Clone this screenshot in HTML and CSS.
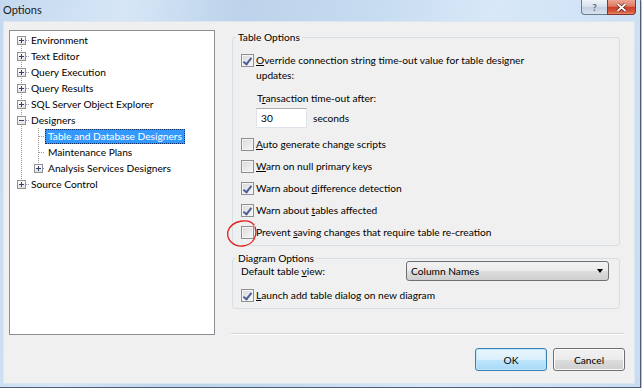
FILE: index.html
```html
<!DOCTYPE html>
<html lang="en">
  <head>
    <meta charset="UTF-8" />
    <title>Options</title>
    <link rel="stylesheet" href="styles.css">
  </head>
  <body>
    <div class="window">
      <div class="titlebar">
        <span class="title">Options</span>
        <div class="caption-buttons">
          <span class="cap-btn help">?</span>
          <span class="cap-btn close">
            <svg width="11" height="9" viewBox="0 0 11 9"><path d="M1.5 1 L9.5 8 M9.5 1 L1.5 8" stroke="#5a1a12" stroke-width="3.2"/><path d="M1.5 1 L9.5 8 M9.5 1 L1.5 8" stroke="#fff" stroke-width="1.8"/></svg>
          </span>
        </div>
      </div>

      <div class="client">
        <div class="main">
          <!-- arbre des pages -->
          <div class="tree">
            <div class="node first"><span class="tw plus"></span><span class="lbl">Environment</span></div>
            <div class="node"><span class="tw plus"></span><span class="lbl">Text Editor</span></div>
            <div class="node"><span class="tw plus"></span><span class="lbl">Query Execution</span></div>
            <div class="node"><span class="tw plus"></span><span class="lbl">Query Results</span></div>
            <div class="node"><span class="tw plus"></span><span class="lbl">SQL Server Object Explorer</span></div>
            <div class="node"><span class="tw minus"></span><span class="lbl">Designers</span></div>
            <div class="node child"><span class="lbl sel">Table and Database Designers</span></div>
            <div class="node child"><span class="lbl">Maintenance Plans</span></div>
            <div class="node child-last"><span class="tw plus"></span><span class="lbl">Analysis Services Designers</span></div>
            <div class="node last"><span class="tw plus"></span><span class="lbl">Source Control</span></div>
          </div>

          <div class="pane">
            <fieldset class="group table-opts">
              <legend>Table Options</legend>
              <div class="row first-row">
                <span class="cb checked"></span>
                <span><u>O</u>verride connection string time-out value for table designer<br>updates:</span>
              </div>
              <div class="sub-label">T<u>r</u>ansaction time-out after:</div>
              <div class="timeout">
                <span class="textbox">30</span>
                <span class="seconds">seconds</span>
              </div>
              <div class="row gap-row">
                <span class="cb"></span>
                <span><u>A</u>uto generate change scripts</span>
              </div>
              <div class="row">
                <span class="cb"></span>
                <span><u>W</u>arn on null primary keys</span>
              </div>
              <div class="row">
                <span class="cb checked"></span>
                <span>Warn about <u>d</u>ifference detection</span>
              </div>
              <div class="row">
                <span class="cb checked"></span>
                <span>Warn about <u>t</u>ables affected</span>
              </div>
              <div class="row">
                <span class="cb marked">
                  <svg class="circle" width="34" height="30" viewBox="0 0 34 30"><path d="M27 6 C22 -1, 5 1, 1 12 C-1 21, 7 28, 16 27 C26 26, 31 17, 28 8" fill="none" stroke="#e02020" stroke-width="1.3" stroke-linecap="round"/></svg>
                </span>
                <span>Prevent <u>s</u>aving changes that require table re-creation</span>
              </div>
            </fieldset>

            <fieldset class="group diagram-opts">
              <legend>Diagram Options</legend>
              <div class="view-row">
                <span class="view-label">Default table <u>v</u>iew:</span>
                <span class="select">Column Names<span class="arrow"></span></span>
              </div>
              <div class="row">
                <span class="cb checked"></span>
                <span><u>L</u>aunch add table dialog on new diagram</span>
              </div>
            </fieldset>

            <div class="separator"></div>
          </div>
        </div>

        <div class="buttons">
          <button class="btn default">OK</button>
          <button class="btn">Cancel</button>
        </div>
      </div>
    </div>
  </body>
</html>
```

FILE: styles.css
```css
* {
  box-sizing: border-box;
}
body {
  margin: 0;
  background: #fff;
  font-family: Lato, "Open Sans", sans-serif;
  font-size: 10.2px;
  color: #000;
}
u {
  text-decoration-thickness: 1px;
  text-underline-offset: 1px;
}

/* cadre de la fenêtre */
.window {
  width: 641px;
  height: 388px;
  padding: 0 5px 3px 3px;
  display: flex;
  flex-direction: column;
  background: linear-gradient(100deg, #c4d9ef 0%, #d6e6f6 18%, #bcd3eb 34%, #c6dbf0 52%, #d8e8f8 70%, #c8ddf2 100%);
  border-right: 1px solid #4f5d70;
  border-bottom: 1px solid #4f5d70;
  box-shadow: 1px 1px 2px rgba(0, 0, 0, 0.35);
}
.titlebar {
  height: 21px;
  display: flex;
  justify-content: space-between;
  align-items: flex-start;
}
.title {
  padding-top: 3px;
  font-size: 11px;
  color: #1a1a1a;
}
.caption-buttons {
  display: flex;
  margin-right: -1px;
}
.cap-btn {
  height: 15px;
  display: flex;
  align-items: center;
  justify-content: center;
}
.help {
  width: 26px;
  border: 1px solid #6b7c91;
  border-top: none;
  border-right: none;
  border-radius: 0 0 0 4px;
  background: linear-gradient(#eef3f9, #d6e0ec 48%, #c3d0e0 52%, #d9e3ef);
  color: #5a6b82;
  font-weight: bold;
  font-size: 10px;
}
.close {
  width: 29px;
  border: 1px solid #8a3427;
  border-top: none;
  border-radius: 0 0 4px 0;
  background: linear-gradient(#eda594, #e07a62 45%, #c9402a 52%, #d75a3e 85%, #e88f70);
}

.client {
  height: 363px;
  background: #f0f0f0;
  border: 1px solid #dce6f0;
  padding: 8px 9px 0 5px;
  display: flex;
  flex-direction: column;
}
.main {
  height: 305px;
  display: flex;
}

/* arbre */
.tree {
  --v: repeating-linear-gradient(#9a9a9a 0 1px, transparent 1px 2px);
  --h: repeating-linear-gradient(90deg, #9a9a9a 0 1px, transparent 1px 2px);
  width: 206px;
  background: #fff;
  border: 1px solid #8a8f96;
  padding-top: 1px;
}
.node {
  height: 16px;
  display: flex;
  align-items: center;
  white-space: nowrap;
  background: var(--v) 11px 0 / 1px 100% no-repeat, var(--h) 16px 8px / 3px 1px no-repeat;
}
.node.first {
  background: var(--v) 11px 8px / 1px 8px no-repeat, var(--h) 16px 8px / 3px 1px no-repeat;
}
.node.last {
  background: var(--v) 11px 0 / 1px 8px no-repeat, var(--h) 16px 8px / 3px 1px no-repeat;
}
.node.child {
  padding-left: 35px;
  background: var(--v) 11px 0 / 1px 100% no-repeat, var(--v) 28px 0 / 1px 100% no-repeat, var(--h) 29px 8px / 6px 1px no-repeat;
}
.node.child-last {
  background: var(--v) 11px 0 / 1px 100% no-repeat, var(--v) 28px 0 / 1px 8px no-repeat, var(--h) 33px 8px / 2px 1px no-repeat;
}
.tw {
  width: 9px;
  height: 9px;
  margin-left: 7px;
  border: 1px solid #919191;
  background: linear-gradient(#fff, #e2e2e2);
  position: relative;
  flex: none;
}
.child-last .tw {
  margin-left: 24px;
}
.tw::before,
.tw::after {
  content: "";
  position: absolute;
  background: #2c4170;
}
.tw::before {
  left: 1px;
  top: 3px;
  width: 5px;
  height: 1px;
}
.tw.plus::after {
  left: 3px;
  top: 1px;
  width: 1px;
  height: 5px;
}
.lbl {
  margin-left: 2px;
  padding: 0 2px;
  line-height: 13px;
  border: 1px solid transparent;
}
.child .lbl {
  margin-left: 0;
}
.lbl.sel {
  background: #3399ff;
  color: #fff;
  border: 1px dotted #0b2f66;
}

/* panneau de droite */
.pane {
  flex: 1;
  margin-left: 16px;
  display: flex;
  flex-direction: column;
}
.group {
  margin: 0 5px 0 1px;
  padding: 0 8px 5px 8px;
  border: 1px solid #d5dfe5;
  border-radius: 3px;
  min-width: 0;
}
.group legend {
  margin-left: -5px;
  padding: 0 2px;
  line-height: 14px;
}
.row {
  display: flex;
  align-items: flex-start;
  line-height: 15px;
  margin-top: 7px;
}
.row.first-row {
  margin-top: 9px;
}
.row.gap-row {
  margin-top: 9px;
}
.cb {
  width: 13px;
  height: 13px;
  margin: 1px 2px 0 0;
  flex: none;
  position: relative;
  border: 1px solid #8e8f8f;
  background: linear-gradient(135deg, #d9d9d9, #f7f7f7);
  box-shadow: inset 0 0 0 1px #f4f4f4;
}
.cb.checked::after {
  content: "";
  position: absolute;
  left: 3px;
  top: 1px;
  width: 3px;
  height: 7px;
  border-right: 2px solid #4a5f96;
  border-bottom: 2px solid #4a5f96;
  transform: rotate(38deg);
}
.circle {
  position: absolute;
  left: -15px;
  top: -8px;
  overflow: visible;
}
.sub-label {
  margin: 8px 0 0 16px;
  line-height: 15px;
}
.timeout {
  display: flex;
  align-items: center;
  margin: 2px 0 0 15px;
}
.textbox {
  width: 51px;
  height: 20px;
  background: #fff;
  border: 1px solid #e2e3ea;
  border-top-color: #abadb3;
  padding-left: 4px;
  line-height: 18px;
}
.seconds {
  margin-left: 6px;
}
.diagram-opts {
  margin-top: 5px;
}
.view-row {
  display: flex;
  align-items: center;
  margin-top: -4px;
}
.view-label {
  width: 165px;
}
.select {
  width: 203px;
  height: 20px;
  padding-left: 4px;
  display: flex;
  align-items: center;
  justify-content: space-between;
  border: 1px solid #707070;
  border-radius: 3px;
  background: linear-gradient(#f2f2f2, #ebebeb 50%, #dddddd 51%, #cfcfcf);
}
.arrow {
  margin-right: 5px;
  border-left: 3px solid transparent;
  border-right: 3px solid transparent;
  border-top: 4px solid #000;
}
.separator {
  margin: auto 1px 0 0;
  height: 2px;
  border-top: 1px solid #d5d5d5;
  border-bottom: 1px solid #fff;
}

/* boutons */
.buttons {
  display: flex;
  justify-content: flex-end;
  gap: 6px;
  margin-top: 13px;
}
.btn {
  width: 72px;
  height: 23px;
  font: inherit;
  color: #000;
  border: 1px solid #707070;
  border-radius: 3px;
  background: linear-gradient(#f2f2f2, #ebebeb 50%, #dddddd 51%, #cfcfcf);
  box-shadow: inset 0 0 0 1px #fbfbfb;
}
.btn.default {
  border-color: #3c7fb1;
  background: linear-gradient(#eaf6fd, #d9f0fc 50%, #bee6fd 51%, #a7d9f5);
  box-shadow: inset 0 0 0 1px #c0e6fb;
}
```
